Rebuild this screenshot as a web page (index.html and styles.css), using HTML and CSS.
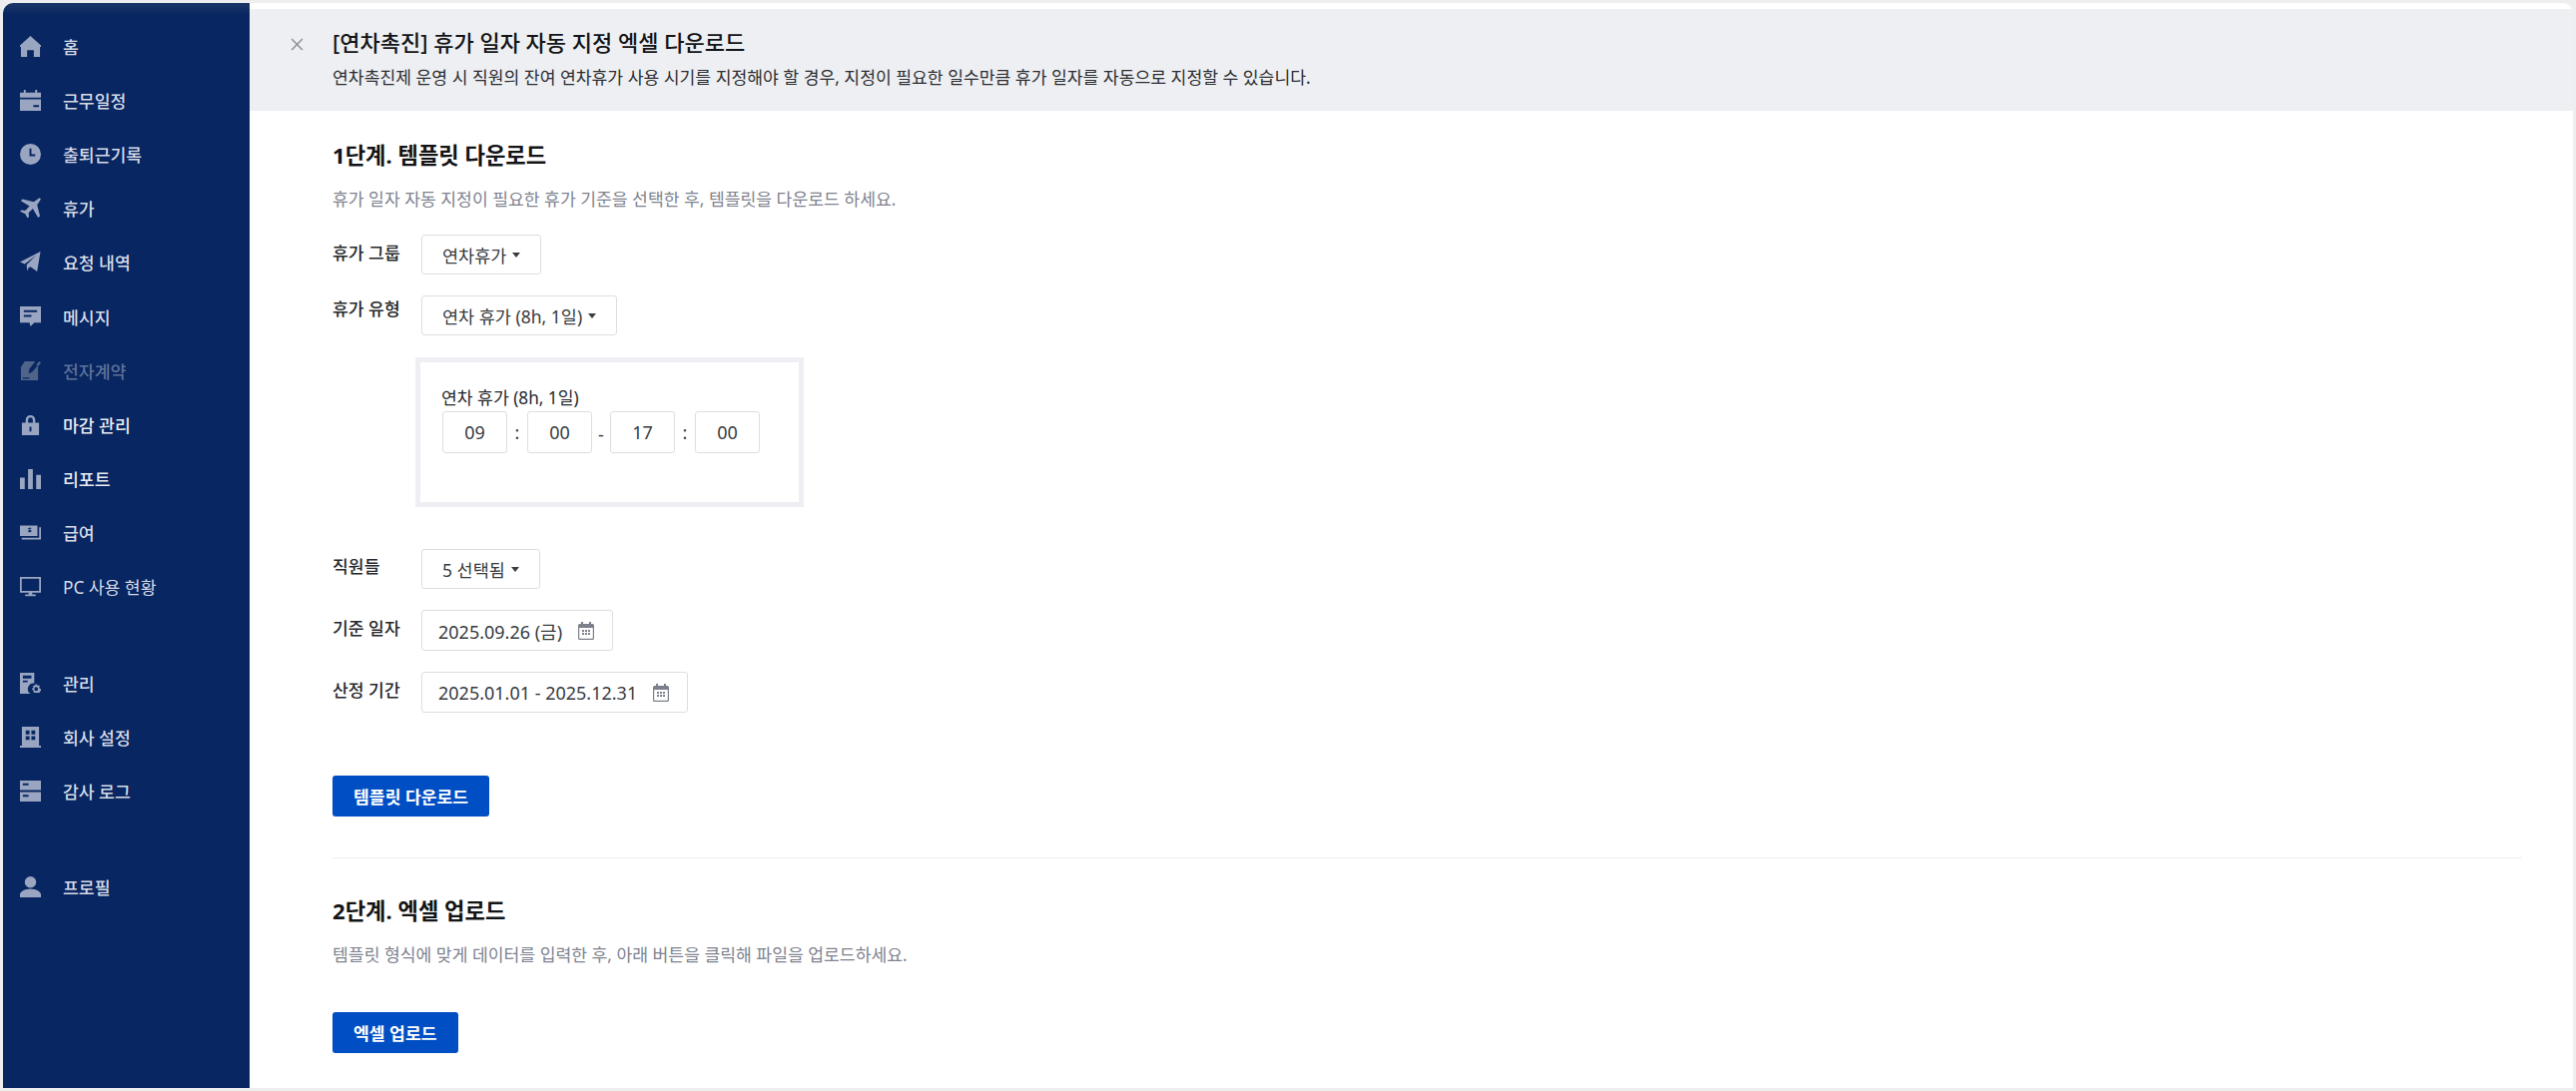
FILE: index.html
```html
<!DOCTYPE html>
<html lang="ko">
<head>
<meta charset="utf-8">
<title>휴가 일자 자동 지정 엑셀 다운로드</title>
<link rel="stylesheet" href="styles.css">
</head>
<body>
<div class="app">
  <nav class="sidebar">
    <a class="nav-item"><svg class="nav-icon" viewBox="0 0 22 22"><path d="M11 0 22 10v1.500h-1V22h-6.500v-7h-7v7H1V11.500H0V10z"/></svg><span>홈</span></a>
    <a class="nav-item"><svg class="nav-icon" viewBox="0 0 22 22"><path d="M4 0h2v3h10V0h2v3h4v5H0V3h4zM0 10h22v12H0zm14 6v2h6v-2z" fill-rule="evenodd"/></svg><span>근무일정</span></a>
    <a class="nav-item"><svg class="nav-icon" viewBox="0 0 22 22"><path fill-rule="evenodd" d="M11 0a11 11 0 1 1 0 22 11 11 0 0 1 0-22zM10 5v8h6v-2h-4V5z"/></svg><span>출퇴근기록</span></a>
    <a class="nav-item"><svg class="nav-icon" viewBox="0 0 22 22"><path d="M20 .6c1-.6 2.200.6 1.600 1.600L18 7.500l3 12-2 1.500-5.500-9.500-4.500 4.500.5 4L8 21.500l-2.500-4.500L0 14.500 1.500 13l4 .5 4.500-4.500L1 3.500 2.500 1.500l12 3z"/></svg><span>휴가</span></a>
    <a class="nav-item"><svg class="nav-icon" viewBox="0 0 22 22"><path d="M21.500 0 18 21l-7-5-2 1-1.500 3.500L7 14 17 4 5 13 0 11z"/></svg><span>요청 내역</span></a>
    <a class="nav-item"><svg class="nav-icon" viewBox="0 0 22 22"><path fill-rule="evenodd" d="M0 0h22v17h-7l-4 4-1-4H0zM4 4v2h14V4zm0 5v2h8V9z"/></svg><span>메시지</span></a>
    <a class="nav-item is-disabled"><svg class="nav-icon" viewBox="0 0 22 22"><path fill-rule="evenodd" d="M5 1h11l-6 8-1 5 4-2 6-7v16H1V7zM17 5l3-4 2 1.500-3 4zM3 18v1.500h7V18z"/></svg><span>전자계약</span></a>
    <a class="nav-item is-strong"><svg class="nav-icon" viewBox="0 0 22 22"><path fill-rule="evenodd" d="M6 9V6a5 5 0 0 1 10 0v3h4v13H2V9zm2.500 0h5V6a2.500 2.500 0 0 0-5 0zM10 13v5h2v-5z"/></svg><span>마감 관리</span></a>
    <a class="nav-item is-strong"><svg class="nav-icon" viewBox="0 0 22 22"><path d="M0 10h5v12H0zM8.500 1h5v21h-5zM17 7h5v15h-5z"/></svg><span>리포트</span></a>
    <a class="nav-item"><svg class="nav-icon" viewBox="0 0 24 22"><path fill-rule="evenodd" d="M0 3h20v12H0zm9 3v1h1v2H9v1h2v1h1v-1h1V8h-2V7h2V6h-1V5h-1v1zM2 17h20V5h2v14H2z"/></svg><span>급여</span></a>
    <a class="nav-item is-light"><svg class="nav-icon" viewBox="0 0 24 22"><path fill-rule="evenodd" d="M0 0h24v18H14v2h4v2H6v-2h4v-2H0zm2 2v14h20V2z"/></svg><span>PC 사용 현황</span></a>
    <a class="nav-item has-gap"><svg class="nav-icon" viewBox="0 0 22 22"><path fill-rule="evenodd" d="M0 0h15v11a6 6 0 0 0-4 11H0zM3 3v3h9V3zM3 8v2h5V8zM16 12h2l.5 1.500 1.500-.5 1 1.500-1 1 .5 1 1.500.5v2l-1.500.5.500 1.500h-6l-1-1 .5-1.500-1.500-.5v-2l1.500-.5-1-1.500 1.500-1 1 .5zm1 3a2 2 0 1 0 0 4 2 2 0 0 0 0-4z"/></svg><span>관리</span></a>
    <a class="nav-item"><svg class="nav-icon" viewBox="0 0 22 22"><path fill-rule="evenodd" d="M2 0h18v20h2v2H0v-2h2zM6 4v4h4V4zm6 0v4h4V4zM6 10v4h4v-4zm6 0v4h4v-4z"/></svg><span>회사 설정</span></a>
    <a class="nav-item"><svg class="nav-icon" viewBox="0 0 22 22"><path fill-rule="evenodd" d="M0 0h22v10H0zm3 3v2h6V3zM0 12h22v10H0zm3 3v2h6v-2z"/></svg><span>감사 로그</span></a>
    <a class="nav-item has-gap"><svg class="nav-icon" viewBox="0 0 22 22"><path d="M11 0a6 6 0 1 1 0 12 6 6 0 0 1 0-12zM0 22v-3c0-3 5-6 11-6s11 3 11 6v3z"/></svg><span>프로필</span></a>
  </nav>
  <main class="main">
    <header class="page-head">
      <svg class="close-icon" viewBox="0 0 12 12"><path d="M1 1l10 10M11 1 1 11"/></svg>
      <div>
        <h1 class="page-title">[연차촉진] 휴가 일자 자동 지정 엑셀 다운로드</h1>
        <p class="page-desc">연차촉진제 운영 시 직원의 잔여 연차휴가 사용 시기를 지정해야 할 경우, 지정이 필요한 일수만큼 휴가 일자를 자동으로 지정할 수 있습니다.</p>
      </div>
    </header>
    <div class="content">
      <section class="step">
        <h2 class="step-title">1단계. 템플릿 다운로드</h2>
        <p class="step-desc">휴가 일자 자동 지정이 필요한 휴가 기준을 선택한 후, 템플릿을 다운로드 하세요.</p>
        <div class="form-row row-group"><label class="form-label">휴가 그룹</label><button class="select"><span>연차휴가</span><i class="caret"></i></button></div>
        <div class="form-row row-type"><label class="form-label">휴가 유형</label><button class="select"><span>연차 휴가 (8h, 1일)</span><i class="caret"></i></button></div>
        <div class="time-box">
          <div class="time-name">연차 휴가 (8h, 1일)</div>
          <div class="time-row">
            <span class="time-input">09</span><span class="sep sep-colon">:</span>
            <span class="time-input">00</span><span class="sep sep-dash">-</span>
            <span class="time-input">17</span><span class="sep sep-colon">:</span>
            <span class="time-input">00</span>
          </div>
        </div>
        <div class="form-row row-emp"><label class="form-label">직원들</label><button class="select"><span>5 선택됨</span><i class="caret"></i></button></div>
        <div class="form-row row-date"><label class="form-label">기준 일자</label><div class="date-input"><span>2025.09.26 (금)</span><svg class="cal-icon" viewBox="0 0 16 18"><path fill-rule="evenodd" d="M3 0h2v2h6V0h2v2h1.500A1.500 1.500 0 0 1 16 3.500v13a1.500 1.500 0 0 1-1.500 1.500h-13A1.500 1.500 0 0 1 0 16.500v-13A1.500 1.500 0 0 1 1.500 2H3zM1.200 6v10.300c0 .3.2.5.5.5h12.600c.3 0 .5-.2.500-.5V6zM4 8h2v2H4zm3 0h2v2H7zm3 0h2v2h-2zm-6 3h2v2H4zm3 0h2v2H7zm3 0h2v2h-2z"/></svg></div></div>
        <div class="form-row row-date"><label class="form-label">산정 기간</label><div class="date-input"><span>2025.01.01 - 2025.12.31</span><svg class="cal-icon" viewBox="0 0 16 18"><path fill-rule="evenodd" d="M3 0h2v2h6V0h2v2h1.500A1.500 1.500 0 0 1 16 3.500v13a1.500 1.500 0 0 1-1.500 1.500h-13A1.500 1.500 0 0 1 0 16.500v-13A1.500 1.500 0 0 1 1.500 2H3zM1.200 6v10.300c0 .3.2.5.5.5h12.600c.3 0 .5-.2.500-.5V6zM4 8h2v2H4zm3 0h2v2H7zm3 0h2v2h-2zm-6 3h2v2H4zm3 0h2v2H7zm3 0h2v2h-2z"/></svg></div></div>
        <button class="primary primary-first">템플릿 다운로드</button>
      </section>
      <hr class="divider">
      <section class="step step-second">
        <h2 class="step-title">2단계. 엑셀 업로드</h2>
        <p class="step-desc">템플릿 형식에 맞게 데이터를 입력한 후, 아래 버튼을 클릭해 파일을 업로드하세요.</p>
        <button class="primary primary-second">엑셀 업로드</button>
      </section>
    </div>
  </main>
</div>
</body>
</html>
```
FILE: styles.css
```css
* { box-sizing: border-box; }
html, body { margin: 0; height: 100%; }
body {
  background: #eeeeee;
  padding: 3px;
  font-family: "Noto Sans", "Noto Sans CJK KR", sans-serif;
  color: #1c1d1f;
  font-size: 17.2px;
  overflow: hidden;
}
.app {
  display: flex;
  height: 1087px;
  border-radius: 10px 10px 0 0;
  overflow: hidden;
  background: #fff;
}
.sidebar {
  width: 247px;
  flex: none;
  background: linear-gradient(#1d3768 0, #082661 12px);
  padding-top: 16px;
  display: flex;
  flex-direction: column;
}
.nav-item {
  display: flex;
  align-items: center;
  height: 54.2px;
  padding-left: 17px;
  color: #d5dae6;
  font-size: 17.2px;
  font-weight: 500;
}
.nav-item.has-gap { margin-top: 42px; }
.nav-item.is-disabled { color: #5e7199; }
.nav-item.is-strong { color: #e8ebf1; }
.nav-item.is-light { font-weight: 400; }
.nav-icon {
  width: 21px;
  height: 21px;
  margin-right: 22px;
  fill: #9aa6c1;
  flex: none;
}
.is-disabled .nav-icon { fill: #506489; }
.main { flex: 1; min-width: 0; padding-top: 6px; }
.page-head {
  display: flex;
  height: 102px;
  background: #eeeff3;
  padding: 18px 0 0 41px;
  gap: 29px;
}
.close-icon {
  width: 13px;
  height: 13px;
  margin-top: 11px;
  fill: none;
  stroke: #8d8f94;
  stroke-width: 1.400;
  flex: none;
}
.page-title {
  margin: 0;
  font-size: 22px;
  line-height: 30px;
  font-weight: 500;
  color: #131416;
}
.page-desc {
  margin: 10px 0 0;
  font-size: 17.2px;
  line-height: 22px;
  color: #2b2d31;
}
.content { padding: 0 51px 0 83px; }
.step-title {
  margin: 0;
  font-size: 22.2px;
  line-height: 30px;
  font-weight: 700;
  color: #131416;
  padding-top: 30px;
}
.step-second .step-title { padding-top: 38px; }
.step-desc {
  margin: 18px 0 0;
  font-size: 17.2px;
  line-height: 22px;
  color: #80838f;
}
.form-row { display: flex; align-items: flex-start; }
.form-label {
  width: 89px;
  flex: none;
  font-size: 17.2px;
  line-height: 22px;
  padding-top: 8px;
  font-weight: 500;
  color: #26282c;
}
.row-group { margin-top: 24px; }
.row-type { margin-top: 21px; }
.row-type .form-label { padding-top: 3px; }
.row-emp { margin-top: 42px; }
.row-emp .form-label { padding-top: 7px; }
.row-date { margin-top: 21px; }
.row-date .form-label { padding-top: 7.500px; }
.select, .date-input {
  display: inline-flex;
  align-items: center;
  height: 41px;
  background: #fff;
  border: 1px solid #dcdee3;
  border-radius: 3px;
  font: inherit;
  color: #383b40;
}
.select { height: 40px; padding: 0 20px; font-size: 17.5px; }
.caret {
  width: 0;
  height: 0;
  margin-left: 6px;
  border: 4.500px solid transparent;
  border-top: 5px solid #3a3d42;
  border-bottom: 0;
}
.date-input { padding: 0 18px 0 16px; gap: 16px; font-size: 18px; }
.cal-icon { width: 16px; height: 18px; fill: #7c808c; flex: none; }
.time-box {
  width: 389px;
  height: 150px;
  margin: 22px 0 0 83px;
  border: 5px solid #eeeff3;
  padding: 25px 21px 0;
}
.time-name { font-size: 17.2px; line-height: 22px; color: #26282c; }
.time-row { display: flex; align-items: center; margin-top: 2px; padding-left: 1px; }
.time-input {
  width: 65px;
  height: 42px;
  border: 1px solid #dcdee3;
  border-radius: 3px;
  display: flex;
  align-items: center;
  justify-content: center;
  font-size: 18px;
  color: #383b40;
}
.sep { text-align: center; font-size: 18px; color: #383b40; }
.sep-colon { width: 20px; }
.sep-dash { width: 18px; padding-top: 3px; }
.primary {
  display: block;
  height: 41px;
  background: #004ec4;
  color: #fff;
  border: 0;
  border-radius: 3px;
  font: inherit;
  font-size: 17.2px;
  font-weight: 700;
  padding: 0 21px;
}
.primary-first { margin-top: 63px; }
.primary-second { margin-top: 46px; }
.divider { border: 0; border-top: 1px solid #efefef; margin: 41px 0 0; }
```
